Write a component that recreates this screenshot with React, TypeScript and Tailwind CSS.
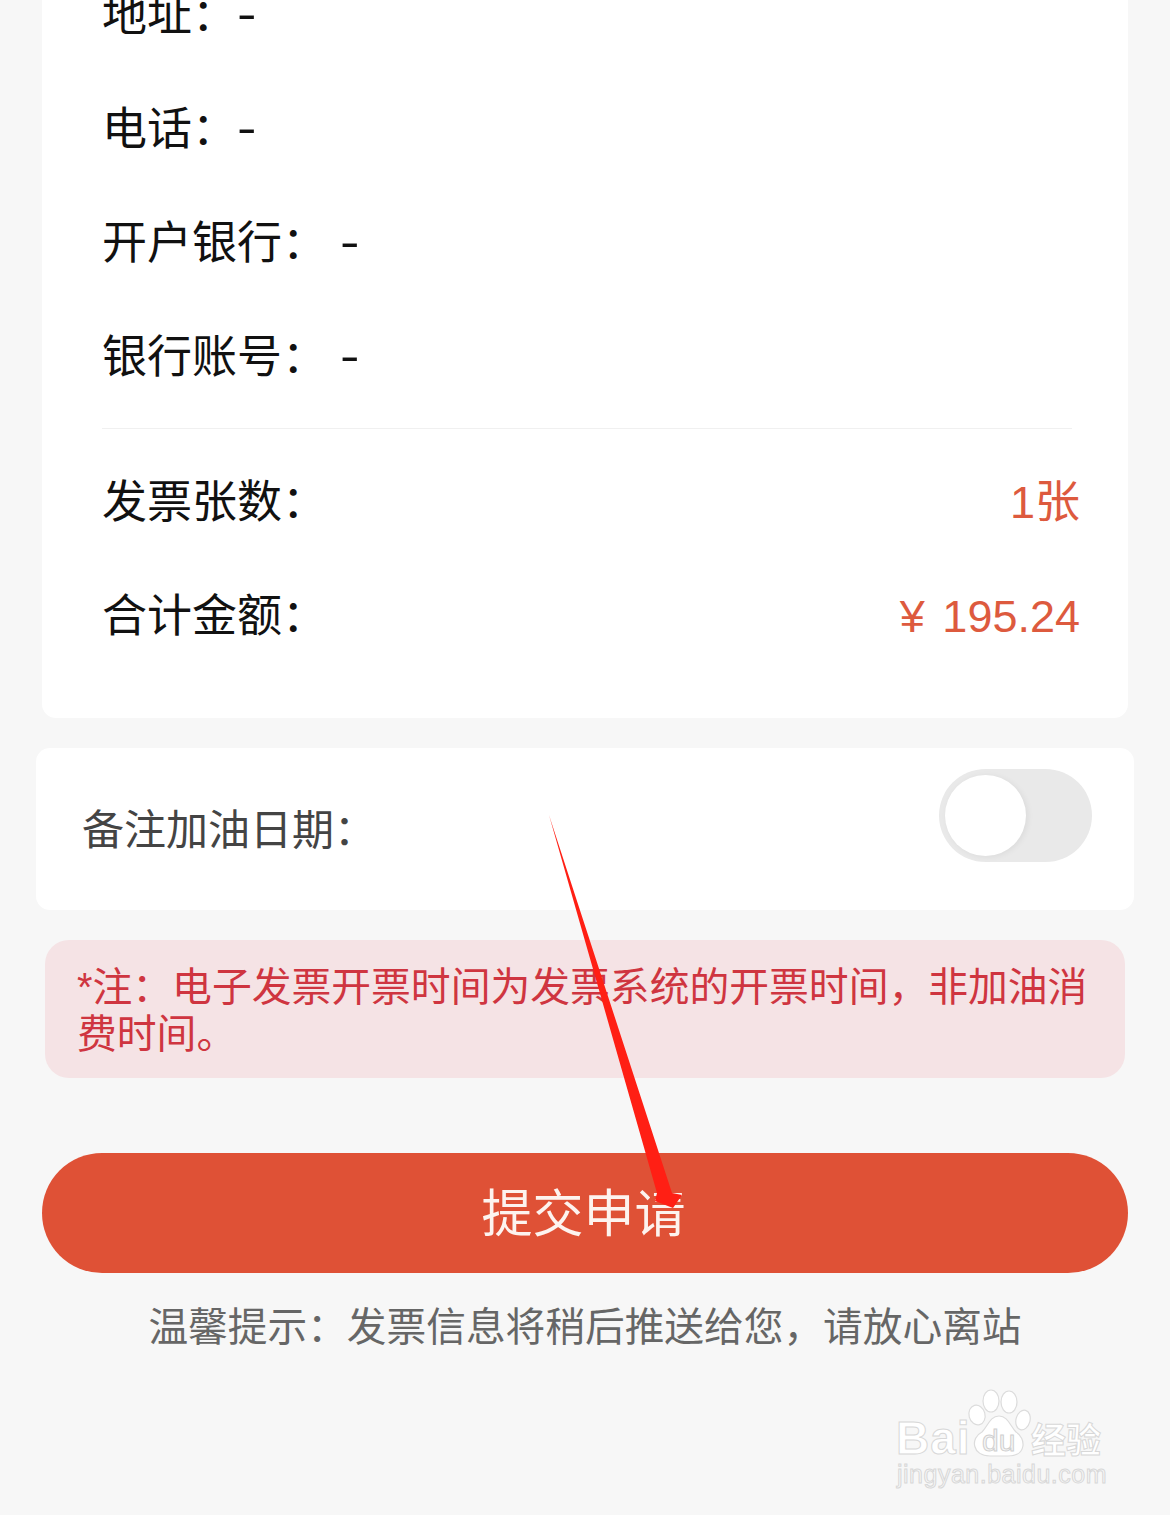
const cjk = "font-['Liberation_Sans','Noto_Sans_CJK_SC',sans-serif]";

function InfoRow({ label, gap }: { label: string; gap: string }) {
  return (
    <div className="flex h-[114px] items-center text-[45px] text-[#111]">
      <span className="pt-[4px]">{label}</span>
      <span className={`inline-block origin-left scale-x-[1.3] ${gap}`}>-</span>
    </div>
  );
}

function TotalRow({ label, value }: { label: string; value: string }) {
  return (
    <div className="flex h-[114px] items-center justify-between pt-[4px] text-[45px] text-[#111]">
      <span>{label}</span>
      <span className="text-[#dd5a3e] [word-spacing:5px]">{value}</span>
    </div>
  );
}

function Toggle() {
  return (
    <div className="flex h-[93px] w-[153px] items-center rounded-full bg-[#e9e9e9] pl-[6px]">
      <div className="size-[81px] rounded-full bg-white shadow-[2px_1px_6px_rgba(0,0,0,0.06)]" />
    </div>
  );
}

function Arrow() {
  return (
    <svg className="absolute left-[540px] top-[810px]" width="160" height="400" viewBox="0 0 160 400">
      <path d="M9 5 L132 383 L142 385 L133 398 L115 391 L117 383 Z" fill="#ff1f14" />
    </svg>
  );
}

function Watermark() {
  return (
    <div className="absolute left-[896px] top-[1388px] h-[104px] w-[212px] text-white">
      <svg className="absolute left-[0px] top-[0px]" width="212" height="72" viewBox="0 0 212 72">
        <g fill="#fff" stroke="#dcdcdc" strokeWidth="1.2">
          <ellipse cx="81" cy="27" rx="8" ry="10" transform="rotate(-15 81 27)" />
          <ellipse cx="95" cy="13" rx="8" ry="11" />
          <ellipse cx="113" cy="14" rx="8" ry="11" />
          <ellipse cx="127" cy="32" rx="7" ry="10" transform="rotate(15 127 32)" />
          <path d="M103 28 C112 28 114 38 120 44 C130 50 131 68 112 68 L94 68 C76 68 74 50 86 44 C92 38 94 28 103 28 Z" />
        </g>
      </svg>
      <span className="absolute left-[0px] top-[25px] font-['Liberation_Sans'] text-[46px] font-bold leading-[50px] tracking-[1px] text-white [-webkit-text-stroke:1px_#d8d8d8]">
        Bai
      </span>
      <span className="absolute left-[86px] top-[36px] font-['Liberation_Sans'] text-[30px] leading-[34px] text-[#f6f6f6] [-webkit-text-stroke:1px_#cfcfcf]">
        du
      </span>
      <span className="absolute left-[135px] top-[27px] font-['Noto_Sans_CJK_SC'] text-[35px] font-bold leading-[46px] text-white [-webkit-text-stroke:1px_#d8d8d8]">
        经验
      </span>
      <span className="absolute left-[1px] top-[72px] font-['Liberation_Sans'] text-[25px] leading-[28px] tracking-[0.5px] text-[#f7f7f7] [-webkit-text-stroke:1px_#d8d8d8]">
        jingyan.baidu.com
      </span>
    </div>
  );
}

export default function App() {
  return (
    <div className={`relative h-[1515px] w-[1170px] overflow-hidden bg-[#f7f7f7] ${cjk}`}>
      <div className="-mt-[43px] ml-[42px] h-[761px] w-[1086px] rounded-b-[14px] bg-white pl-[60px] pr-[48px]">
        <div>
          <InfoRow label="地址：" gap="ml-0" />
          <InfoRow label="电话：" gap="ml-0" />
          <InfoRow label="开户银行：" gap="ml-[13px]" />
          <InfoRow label="银行账号：" gap="ml-[13px]" />
        </div>
        <div className="mr-[8px] mt-[15px] border-t border-[#f0f0f0]" />
        <div className="mt-[15px]">
          <TotalRow label="发票张数：" value="1张" />
          <TotalRow label="合计金额：" value="¥ 195.24" />
        </div>
      </div>

      <div className="ml-[36px] mt-[30px] flex h-[162px] w-[1098px] items-start justify-between rounded-[14px] bg-white pl-[46px] pr-[42px] pt-[21px]">
        <span className="pt-[31px] text-[42px] leading-[62px] text-[#444]">备注加油日期：</span>
        <Toggle />
      </div>

      <div className="ml-[45px] mt-[30px] h-[138px] w-[1080px] rounded-[24px] bg-[#f5e3e5] pl-[32px] pr-[34px] pt-[24px] text-[39.8px] leading-[47px] text-[#cf3540]">
        *注：电子发票开票时间为发票系统的开票时间，非加油消费时间。
      </div>

      <div className="ml-[42px] mt-[75px] flex h-[120px] w-[1086px] items-center justify-center rounded-full bg-[#df5136] pr-[3px] pt-[4px] text-[51px] text-[#fdf3ef]">
        提交申请
      </div>

      <p className="mt-[30px] text-center text-[39.7px] leading-[48px] text-[#666]">
        温馨提示：发票信息将稍后推送给您，请放心离站
      </p>

      <Arrow />
      <Watermark />
    </div>
  );
}
